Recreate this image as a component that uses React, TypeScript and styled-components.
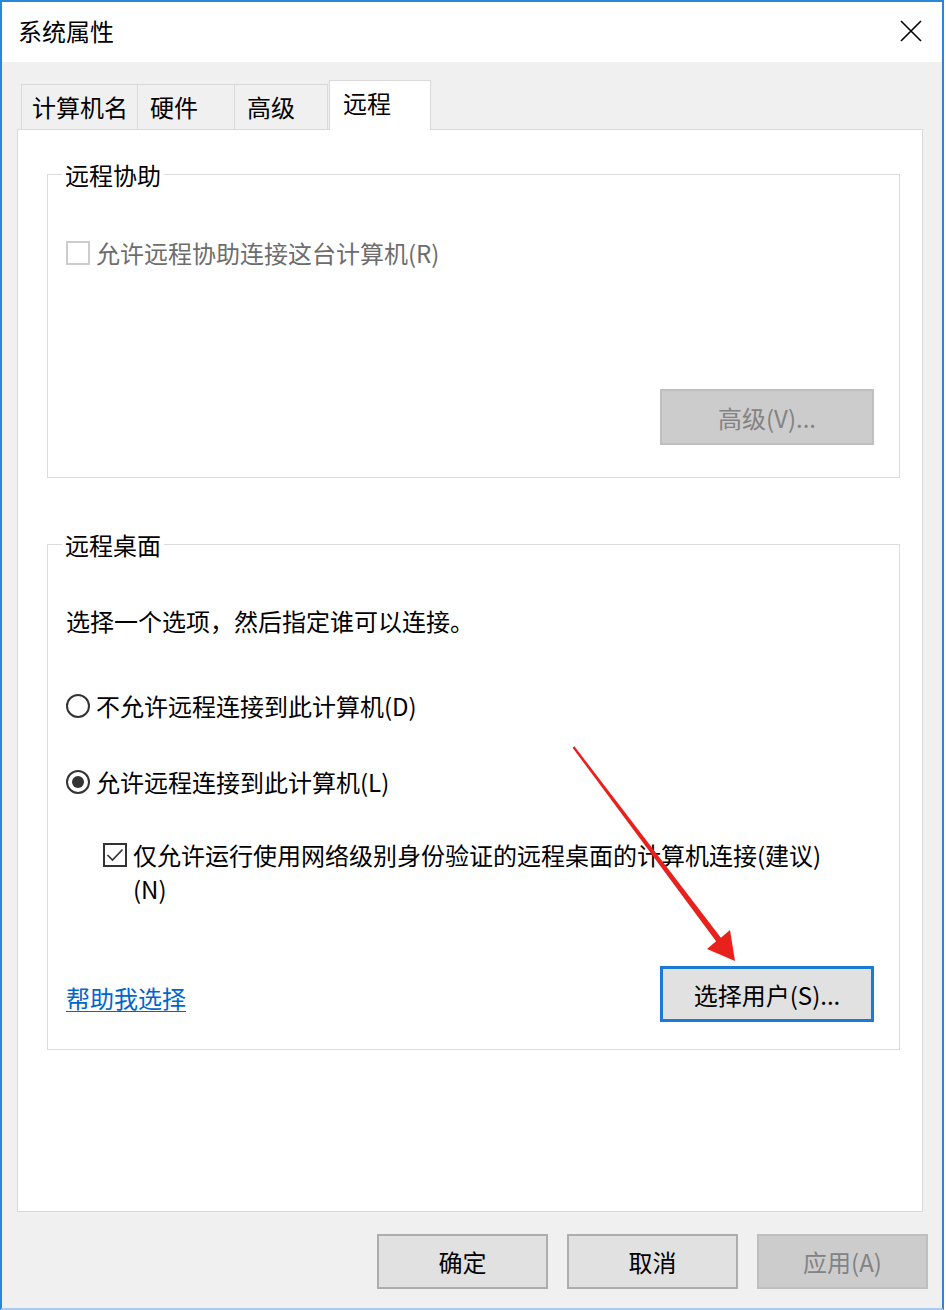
import React from "react";
import styled, { createGlobalStyle } from "styled-components";

const FONT = `"Noto Sans CJK SC", "Microsoft YaHei", "Noto Sans", sans-serif`;

const GlobalStyle = createGlobalStyle`
  html, body { margin: 0; padding: 0; background: #ffffff; }
  body { font-family: ${FONT}; }
  *, *::before, *::after { box-sizing: border-box; }
`;

const Window = styled.div`
  position: relative;
  width: 944px;
  height: 1310px;
  display: flex;
  flex-direction: column;
  border-top: 2px solid #2b86d9;
  border-left: 2px solid #2b86d9;
  border-right: 2px solid #2b86d9;
  border-bottom: 2px solid #a9cbef;
  background: #f0f0f0;
  font-family: ${FONT};
  font-size: 24px;
  color: #000;
`;

const TitleBar = styled.div`
  height: 60px;
  flex: none;
  background: #ffffff;
  display: flex;
  align-items: center;
  justify-content: space-between;
  padding: 0 20px 3px 16px;
`;

const Title = styled.span`
  font-size: 24px;
  line-height: 33px;
`;

const CloseIcon = styled.svg`
  width: 22px;
  height: 22px;
  display: block;
`;

const Body = styled.div`
  flex: 1;
  display: flex;
  flex-direction: column;
  padding: 18px 19px 19px 15px;
`;

const TabRow = styled.div`
  display: flex;
  align-items: flex-end;
  padding-left: 4px;
  position: relative;
  z-index: 1;
`;

const Tab = styled.div<{ $w: number; $active?: boolean }>`
  width: ${(p) => p.$w}px;
  height: ${(p) => (p.$active ? 50 : 45)}px;
  margin-left: ${(p) => (p.$active ? 1 : -1)}px;
  margin-bottom: ${(p) => (p.$active ? -1 : 0)}px;
  border: 1px solid #d9d9d9;
  border-bottom: none;
  background: ${(p) => (p.$active ? "#ffffff" : "#f0f0f0")};
  padding: ${(p) => (p.$active ? "5px 0 0 13px" : "0 0 0 12px")};
  line-height: ${(p) => (p.$active ? 33 : 43)}px;
  white-space: nowrap;

  &:first-child {
    margin-left: 0;
    padding-left: 10px;
  }
`;

const Panel = styled.div`
  flex: 1;
  background: #ffffff;
  border: 1px solid #d9d9d9;
  padding: 28px 0 0 29px;
  display: flex;
  flex-direction: column;
`;

const Group = styled.fieldset<{ $gap?: number; $bottom: number }>`
  margin: ${(p) => p.$gap ?? 0}px 0 0 0;
  width: 853px;
  border: 1px solid #dcdcdc;
  padding: 0 25px ${(p) => p.$bottom}px 18px;
  min-width: 0;
  display: flex;
  flex-direction: column;
`;

const GroupTitle = styled.legend`
  padding: 0 3px;
  margin-left: -4px;
  line-height: 33px;
`;

const OptionRow = styled.label<{ $top: number; $indent?: number; $disabled?: boolean }>`
  display: flex;
  align-items: center;
  gap: 6px;
  margin-top: ${(p) => p.$top}px;
  margin-left: ${(p) => p.$indent ?? 0}px;
  line-height: 33px;
  color: ${(p) => (p.$disabled ? "#6d6d6d" : "#000")};
`;

const WrapRow = styled.label<{ $top: number; $indent: number }>`
  display: flex;
  align-items: flex-start;
  gap: 6px;
  margin-top: ${(p) => p.$top}px;
  margin-left: ${(p) => p.$indent}px;
  line-height: 34px;
`;

const BoxWrap = styled.span`
  height: 34px;
  display: flex;
  align-items: center;
  flex: none;
`;

const CheckBox = styled.span<{ $disabled?: boolean }>`
  width: 24px;
  height: 24px;
  flex: none;
  border: 2px solid ${(p) => (p.$disabled ? "#cccccc" : "#333333")};
  background: #ffffff;
  display: flex;
  align-items: center;
  justify-content: center;
`;

const CheckMark = styled.svg`
  width: 20px;
  height: 20px;
  display: block;
`;

const Radio = styled.span<{ $checked?: boolean }>`
  width: 24px;
  height: 24px;
  flex: none;
  border-radius: 50%;
  border: 2px solid #333333;
  background: #ffffff;
  display: flex;
  align-items: center;
  justify-content: center;

  &::after {
    content: "";
    width: 12px;
    height: 12px;
    border-radius: 50%;
    background: #333333;
    display: ${(p) => (p.$checked ? "block" : "none")};
  }
`;

const Description = styled.div<{ $top: number }>`
  margin-top: ${(p) => p.$top}px;
  line-height: 33px;
`;

const ButtonLine = styled.div<{ $top: number }>`
  margin-top: ${(p) => p.$top}px;
  display: flex;
  align-items: center;
  justify-content: space-between;
`;

const HelpLink = styled.a`
  color: #0066cc;
  text-decoration: underline;
  text-underline-offset: 3px;
  text-decoration-thickness: 1px;
  line-height: 33px;
  padding-top: 7px;
  cursor: pointer;
`;

const Button = styled.button<{ $kind?: "normal" | "disabled" | "focused"; $w: number; $h: number }>`
  width: ${(p) => p.$w}px;
  height: ${(p) => p.$h}px;
  margin: 0;
  padding: 0;
  font-family: ${FONT};
  font-size: 24px;
  line-height: 33px;
  flex: none;
  background: ${(p) => (p.$kind === "disabled" ? "#cccccc" : "#e1e1e1")};
  color: ${(p) => (p.$kind === "disabled" ? "#838383" : "#000000")};
  border: ${(p) =>
    p.$kind === "disabled"
      ? "2px solid #bfbfbf"
      : p.$kind === "focused"
      ? "3px solid #1a7ad6"
      : "2px solid #adadad"};
  border-radius: 0;
`;

const RightAligned = styled.div<{ $top: number }>`
  margin-top: ${(p) => p.$top}px;
  display: flex;
  justify-content: flex-end;
`;

const FooterButtons = styled.div`
  margin-top: 22px;
  margin-right: -5px;
  display: flex;
  justify-content: flex-end;
  gap: 19px;
`;

const Arrow = styled.svg`
  position: absolute;
  left: 558px;
  top: 733px;
  width: 190px;
  height: 240px;
  pointer-events: none;
`;

export default function App() {
  return (
    <>
      <GlobalStyle />
      <Window>
        <TitleBar>
          <Title>系统属性</Title>
          <CloseIcon viewBox="0 0 22 22">
            <path d="M1 1 L21 21 M21 1 L1 21" stroke="#000" strokeWidth="1.6" fill="none" />
          </CloseIcon>
        </TitleBar>
        <Body>
          <TabRow>
            <Tab $w={117}>计算机名</Tab>
            <Tab $w={98}>硬件</Tab>
            <Tab $w={94}>高级</Tab>
            <Tab $w={102} $active>
              远程
            </Tab>
          </TabRow>
          <Panel>
            <Group $bottom={32}>
              <GroupTitle>远程协助</GroupTitle>
              <OptionRow $top={45} $disabled>
                <CheckBox $disabled />
                <span>允许远程协助连接这台计算机(R)</span>
              </OptionRow>
              <RightAligned $top={120}>
                <Button $kind="disabled" $w={214} $h={56}>
                  高级(V)...
                </Button>
              </RightAligned>
            </Group>

            <Group $gap={50} $bottom={27}>
              <GroupTitle>远程桌面</GroupTitle>
              <Description $top={43}>选择一个选项，然后指定谁可以连接。</Description>
              <OptionRow $top={52}>
                <Radio />
                <span>不允许远程连接到此计算机(D)</span>
              </OptionRow>
              <OptionRow $top={43}>
                <Radio $checked />
                <span>允许远程连接到此计算机(L)</span>
              </OptionRow>
              <WrapRow $top={40} $indent={37}>
                <BoxWrap>
                  <CheckBox>
                    <CheckMark viewBox="0 0 20 20">
                      <path
                        d="M2.5 10 L7.5 15 L17.5 4.5"
                        stroke="#333"
                        strokeWidth="1.7"
                        fill="none"
                      />
                    </CheckMark>
                  </CheckBox>
                </BoxWrap>
                <span>
                  仅允许运行使用网络级别身份验证的远程桌面的计算机连接(建议)
                  <br />
                  (N)
                </span>
              </WrapRow>
              <ButtonLine $top={60}>
                <HelpLink>帮助我选择</HelpLink>
                <Button $kind="focused" $w={214} $h={56}>
                  选择用户(S)...
                </Button>
              </ButtonLine>
            </Group>
          </Panel>
          <FooterButtons>
            <Button $w={171} $h={55}>确定</Button>
            <Button $w={171} $h={55}>取消</Button>
            <Button $kind="disabled" $w={171} $h={55}>
              应用(A)
            </Button>
          </FooterButtons>
        </Body>
        <Arrow viewBox="0 0 190 240">
          <path
            d="M14.4 11.3 L160.9 202.7 L170 195 L175 226 L147 214 L156.1 206.3 L12.6 12.7 Z"
            fill="#e8211d"
          />
        </Arrow>
      </Window>
    </>
  );
}
